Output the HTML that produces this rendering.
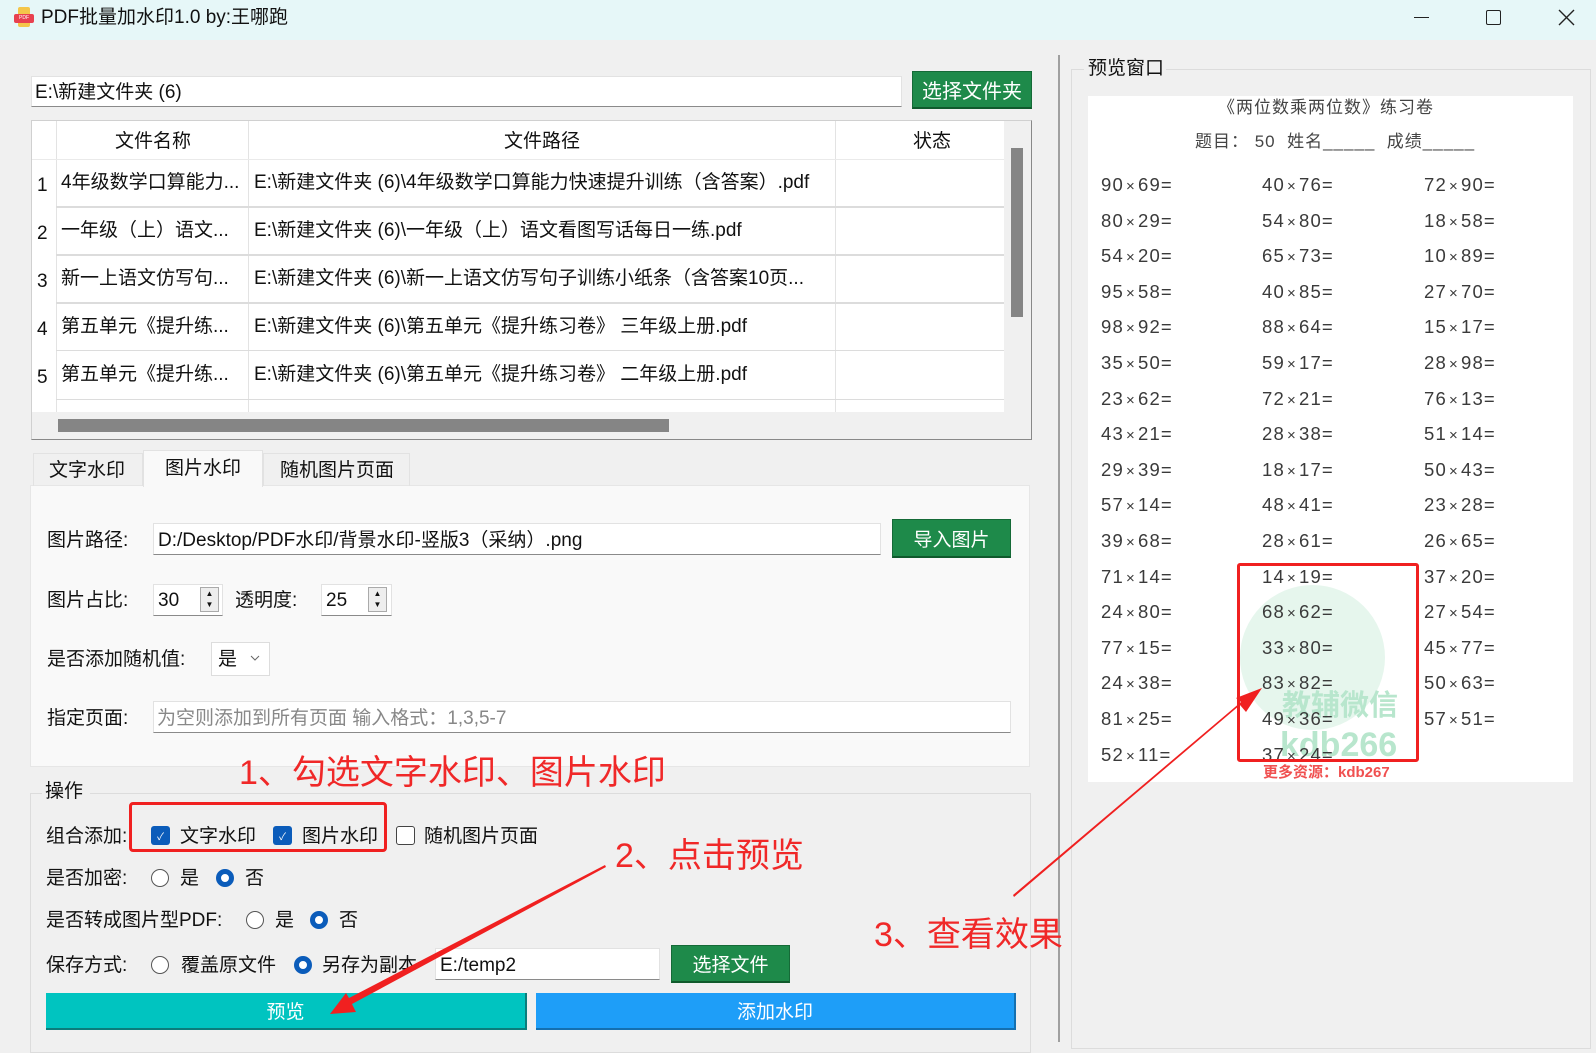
<!DOCTYPE html>
<html><head><meta charset="utf-8"><style>
*{box-sizing:border-box;margin:0;padding:0}
body{width:1596px;height:1042px;background:#f0f0f0;position:relative;overflow:hidden;font-family:"Liberation Sans","Noto Sans CJK SC",sans-serif;color:#111;font-size:19px}
.a{position:absolute}
.t{position:absolute;white-space:nowrap;line-height:1}
.inp{position:absolute;background:#fff;border:1px solid #e2e2e2;border-bottom:1px solid #8a8a8a}
.btn{position:absolute;background:#1e8a4a;color:#fff;border:1px solid #156a37;border-bottom:2px solid #0f5a2c;display:flex;align-items:center;justify-content:center;font-size:19px}
.cell{position:absolute;white-space:nowrap;line-height:1;font-size:19px}
.hl{position:absolute;height:2px;background:#dcdcdc}
.vl{position:absolute;width:1px;background:#e3e3e3}
.num{position:absolute;font-size:18.5px;color:#3a3a3a;line-height:1;white-space:nowrap;font-family:"Liberation Sans","DejaVu Sans",sans-serif;letter-spacing:1.2px}
.num i{font-style:normal;font-size:15px;margin:0 2px}
.rad{position:absolute;width:18px;height:18px;border:1.5px solid #555;border-radius:50%;background:#fff}
.rad.on{border:5px solid #0b5cba;background:#fff}
.chk{position:absolute;width:19px;height:19px;border-radius:3px;background:#0b5cba;color:#fff;font-size:10px;display:flex;align-items:center;justify-content:center}
.red{color:#f02828;font-size:34px;position:absolute;white-space:nowrap;line-height:1}
</style></head><body>
<div class="a" style="left:0;top:0;width:1596px;height:40px;background:#e6f7f8"></div>
<div class="a" style="left:14px;top:7px;width:20px;height:20px">
<div class="a" style="left:4px;top:0;width:12px;height:20px;background:#f4c64a;border-radius:2px"></div>
<div class="a" style="left:0;top:7px;width:20px;height:9px;background:#e8414f;border-radius:2px;font-size:5px;color:#fff;text-align:center;line-height:9px">PDF</div>
</div>
<div class="t" style="left:41px;top:8px;font-size:19px">PDF批量加水印1.0 by:王哪跑</div>
<div class="a" style="left:1414px;top:17px;width:15px;height:1px;background:#222"></div>
<div class="a" style="left:1486px;top:10px;width:15px;height:15px;border:1.5px solid #222;border-radius:2px"></div>
<svg class="a" style="left:1558px;top:9px" width="17" height="17"><path d="M1 1L16 16M16 1L1 16" stroke="#222" stroke-width="1.4"/></svg>

<div class="inp" style="left:31px;top:76px;width:871px;height:31px"></div>
<div class="t" style="left:35px;top:83px">E:\新建文件夹 (6)</div>
<div class="btn" style="left:912px;top:71px;width:120px;height:38px;font-size:20px">选择文件夹</div>

<div class="a" style="left:31px;top:120px;width:1001px;height:320px;background:#f0f0f0;border:1px solid #d0d0d0;border-right:1px solid #888;border-bottom:1px solid #888"></div>
<div class="a" style="left:32px;top:121px;width:972px;height:291px;background:#fff"></div>
<div class="a" style="left:1011px;top:148px;width:12px;height:169px;background:#858585"></div>
<div class="a" style="left:58px;top:419px;width:611px;height:13px;background:#858585"></div>
<div class="vl" style="left:56px;top:121px;height:291px"></div>
<div class="vl" style="left:248px;top:121px;height:291px"></div>
<div class="vl" style="left:835px;top:121px;height:291px"></div>
<div class="hl" style="left:32px;top:159px;width:972px;height:1px;background:#eaeaea"></div>
<div class="hl" style="left:56px;top:206px;width:948px"></div>
<div class="hl" style="left:56px;top:254px;width:948px"></div>
<div class="hl" style="left:56px;top:302px;width:948px"></div>
<div class="hl" style="left:56px;top:350px;width:948px;height:1px"></div>
<div class="hl" style="left:56px;top:399px;width:948px;height:1px"></div>
<div class="cell" style="left:115px;top:132px">文件名称</div>
<div class="cell" style="left:504px;top:132px">文件路径</div>
<div class="cell" style="left:913px;top:132px">状态</div>
<div class="cell" style="left:37px;top:176px">1</div>
<div class="cell" style="left:61px;top:173px">4年级数学口算能力...</div>
<div class="cell" style="left:254px;top:173px">E:\新建文件夹 (6)\4年级数学口算能力快速提升训练（含答案）.pdf</div>
<div class="cell" style="left:37px;top:224px">2</div>
<div class="cell" style="left:61px;top:221px">一年级（上）语文...</div>
<div class="cell" style="left:254px;top:221px">E:\新建文件夹 (6)\一年级（上）语文看图写话每日一练.pdf</div>
<div class="cell" style="left:37px;top:272px">3</div>
<div class="cell" style="left:61px;top:269px">新一上语文仿写句...</div>
<div class="cell" style="left:254px;top:269px">E:\新建文件夹 (6)\新一上语文仿写句子训练小纸条（含答案10页...</div>
<div class="cell" style="left:37px;top:320px">4</div>
<div class="cell" style="left:61px;top:317px">第五单元《提升练...</div>
<div class="cell" style="left:254px;top:317px">E:\新建文件夹 (6)\第五单元《提升练习卷》 三年级上册.pdf</div>
<div class="cell" style="left:37px;top:368px">5</div>
<div class="cell" style="left:61px;top:365px">第五单元《提升练...</div>
<div class="cell" style="left:254px;top:365px">E:\新建文件夹 (6)\第五单元《提升练习卷》 二年级上册.pdf</div>

<div class="a" style="left:30px;top:485px;width:1000px;height:282px;background:#f9f9f9;border:1px solid #e6e6e6"></div>
<div class="a" style="left:33px;top:453px;width:110px;height:33px;border:1px solid #e2e2e2;border-bottom:none"></div>
<div class="a" style="left:143px;top:450px;width:120px;height:37px;background:#f9f9f9;border:1px solid #e2e2e2;border-bottom:none"></div>
<div class="a" style="left:263px;top:453px;width:147px;height:33px;border:1px solid #e2e2e2;border-bottom:none"></div>
<div class="t" style="left:49px;top:461px">文字水印</div>
<div class="t" style="left:165px;top:459px">图片水印</div>
<div class="t" style="left:280px;top:461px">随机图片页面</div>

<div class="t" style="left:47px;top:531px">图片路径:</div>
<div class="inp" style="left:153px;top:523px;width:728px;height:32px"></div>
<div class="t" style="left:158px;top:531px">D:/Desktop/PDF水印/背景水印-竖版3（采纳）.png</div>
<div class="btn" style="left:892px;top:519px;width:119px;height:39px">导入图片</div>

<div class="t" style="left:47px;top:591px">图片占比:</div>
<div class="inp" style="left:153px;top:584px;width:70px;height:32px"></div>
<div class="t" style="left:158px;top:591px">30</div>
<div class="a" style="left:200px;top:587px;width:19px;height:25px;border:1px solid #aaa;background:#eee;font-size:8px;line-height:11px;text-align:center">▲<br>▼</div>
<div class="t" style="left:235px;top:591px">透明度:</div>
<div class="inp" style="left:321px;top:584px;width:71px;height:32px"></div>
<div class="t" style="left:326px;top:591px">25</div>
<div class="a" style="left:368px;top:587px;width:19px;height:25px;border:1px solid #aaa;background:#eee;font-size:8px;line-height:11px;text-align:center">▲<br>▼</div>

<div class="t" style="left:47px;top:650px">是否添加随机值:</div>
<div class="a" style="left:211px;top:642px;width:59px;height:34px;background:#fff;border:1px solid #ddd"></div>
<div class="t" style="left:218px;top:650px">是</div>
<svg class="a" style="left:250px;top:655px" width="10" height="7"><path d="M1 1L5 5L9 1" stroke="#666" fill="none"/></svg>

<div class="t" style="left:47px;top:709px">指定页面:</div>
<div class="inp" style="left:153px;top:701px;width:858px;height:32px"></div>
<div class="t" style="left:157px;top:709px;color:#888">为空则添加到所有页面 输入格式：1,3,5-7</div>

<div class="a" style="left:30px;top:793px;width:1001px;height:260px;border:1px solid #dcdcdc"></div>
<div class="a" style="left:42px;top:780px;width:48px;height:24px;background:#f0f0f0"></div>
<div class="t" style="left:45px;top:782px">操作</div>

<div class="t" style="left:46px;top:827px">组合添加:</div>
<div class="chk" style="left:151px;top:826px">✓</div>
<div class="t" style="left:180px;top:827px">文字水印</div>
<div class="chk" style="left:273px;top:826px">✓</div>
<div class="t" style="left:302px;top:827px">图片水印</div>
<div class="a" style="left:396px;top:826px;width:19px;height:19px;border:1.5px solid #444;border-radius:3px;background:#fff"></div>
<div class="t" style="left:424px;top:827px">随机图片页面</div>
<div class="a" style="left:129px;top:802px;width:258px;height:50px;border:3px solid #f02020;border-radius:4px"></div>

<div class="t" style="left:46px;top:869px">是否加密:</div>
<div class="rad" style="left:151px;top:869px"></div><div class="t" style="left:180px;top:869px">是</div>
<div class="rad on" style="left:216px;top:869px"></div><div class="t" style="left:245px;top:869px">否</div>

<div class="t" style="left:46px;top:911px">是否转成图片型PDF:</div>
<div class="rad" style="left:246px;top:911px"></div><div class="t" style="left:275px;top:911px">是</div>
<div class="rad on" style="left:310px;top:911px"></div><div class="t" style="left:339px;top:911px">否</div>

<div class="t" style="left:46px;top:956px">保存方式:</div>
<div class="rad" style="left:151px;top:956px"></div><div class="t" style="left:181px;top:956px">覆盖原文件</div>
<div class="rad on" style="left:294px;top:956px"></div><div class="t" style="left:322px;top:956px">另存为副本</div>
<div class="inp" style="left:435px;top:948px;width:225px;height:32px"></div>
<div class="t" style="left:440px;top:956px">E:/temp2</div>
<div class="btn" style="left:671px;top:945px;width:119px;height:38px">选择文件</div>

<div class="a" style="left:46px;top:993px;width:481px;height:37px;background:#00c4c0;border-bottom:2px solid #0b7d7b;border-right:2px solid #0b7d7b;color:#fff;display:flex;align-items:center;justify-content:center">预览</div>
<div class="a" style="left:536px;top:993px;width:480px;height:37px;background:#1e9ef8;border-bottom:2px solid #1470b0;border-right:2px solid #1470b0;color:#fff;display:flex;align-items:center;justify-content:center">添加水印</div>

<div class="a" style="left:1058px;top:55px;width:2px;height:987px;background:#a0a0a0"></div>

<div class="a" style="left:1071px;top:69px;width:520px;height:980px;border:1px solid #dcdcdc"></div>
<div class="a" style="left:1084px;top:56px;width:82px;height:26px;background:#f0f0f0"></div>
<div class="t" style="left:1088px;top:59px">预览窗口</div>
<div class="a" style="left:1088px;top:96px;width:485px;height:686px;background:#fff"></div>
<div class="t" style="left:1218px;top:99px;font-size:17px;color:#444;letter-spacing:1px">《两位数乘两位数》练习卷</div>
<div class="t" style="left:1195px;top:133px;font-size:17px;color:#444;letter-spacing:1px">题目：&nbsp;50&nbsp;&nbsp;姓名_____&nbsp;&nbsp;成绩_____</div>
<div class="a" style="left:1240px;top:585px;width:145px;height:145px;border-radius:50%;background:rgba(200,235,215,0.45)"></div>
<div class="t" style="left:1282px;top:692px;font-size:29px;color:#b8e6cd;font-weight:bold">教辅微信</div>
<div class="t" style="left:1280px;top:728px;font-size:34px;color:#b8e6cd;font-weight:bold">kdb266</div>
<div class="t" style="left:1263px;top:765px;font-size:15px;color:#f05050;font-weight:bold">更多资源：kdb267</div>
<div id="nums"></div>
<div class="a" style="left:1237px;top:563px;width:182px;height:199px;border:3px solid #f02020;border-radius:3px"></div>

<div class="red" style="left:239px;top:756px">1、勾选文字水印、图片水印</div>
<div class="red" style="left:615px;top:839px">2、点击预览</div>
<div class="red" style="left:874px;top:918px">3、查看效果</div>
<svg class="a" style="left:0;top:0" width="1596" height="1042">
<polygon points="605,865 606,867 352,1004 356,1012 330,1014 346,993 349,998" fill="#f02020"/>
<polygon points="1013,895 1014,897 1240,705 1246,712 1262,688 1236,698 1241,702" fill="#f02020"/>
</svg>
<script>
var d=[["90×69","40×76","72×90"],["80×29","54×80","18×58"],["54×20","65×73","10×89"],["95×58","40×85","27×70"],["98×92","88×64","15×17"],["35×50","59×17","28×98"],["23×62","72×21","76×13"],["43×21","28×38","51×14"],["29×39","18×17","50×43"],["57×14","48×41","23×28"],["39×68","28×61","26×65"],["71×14","14×19","37×20"],["24×80","68×62","27×54"],["77×15","33×80","45×77"],["24×38","83×82","50×63"],["81×25","49×36","57×51"],["52×11","37×24",""]];
var x=[1101,1262,1424],h="";
d.forEach(function(r,i){r.forEach(function(s,j){if(s){var p=s.split("×");h+='<div class="num" style="left:'+x[j]+'px;top:'+(176+35.6*i).toFixed(0)+'px">'+p[0]+'<i>×</i>'+p[1]+'=</div>';}});});
document.getElementById("nums").innerHTML=h;
</script>
</body></html>
